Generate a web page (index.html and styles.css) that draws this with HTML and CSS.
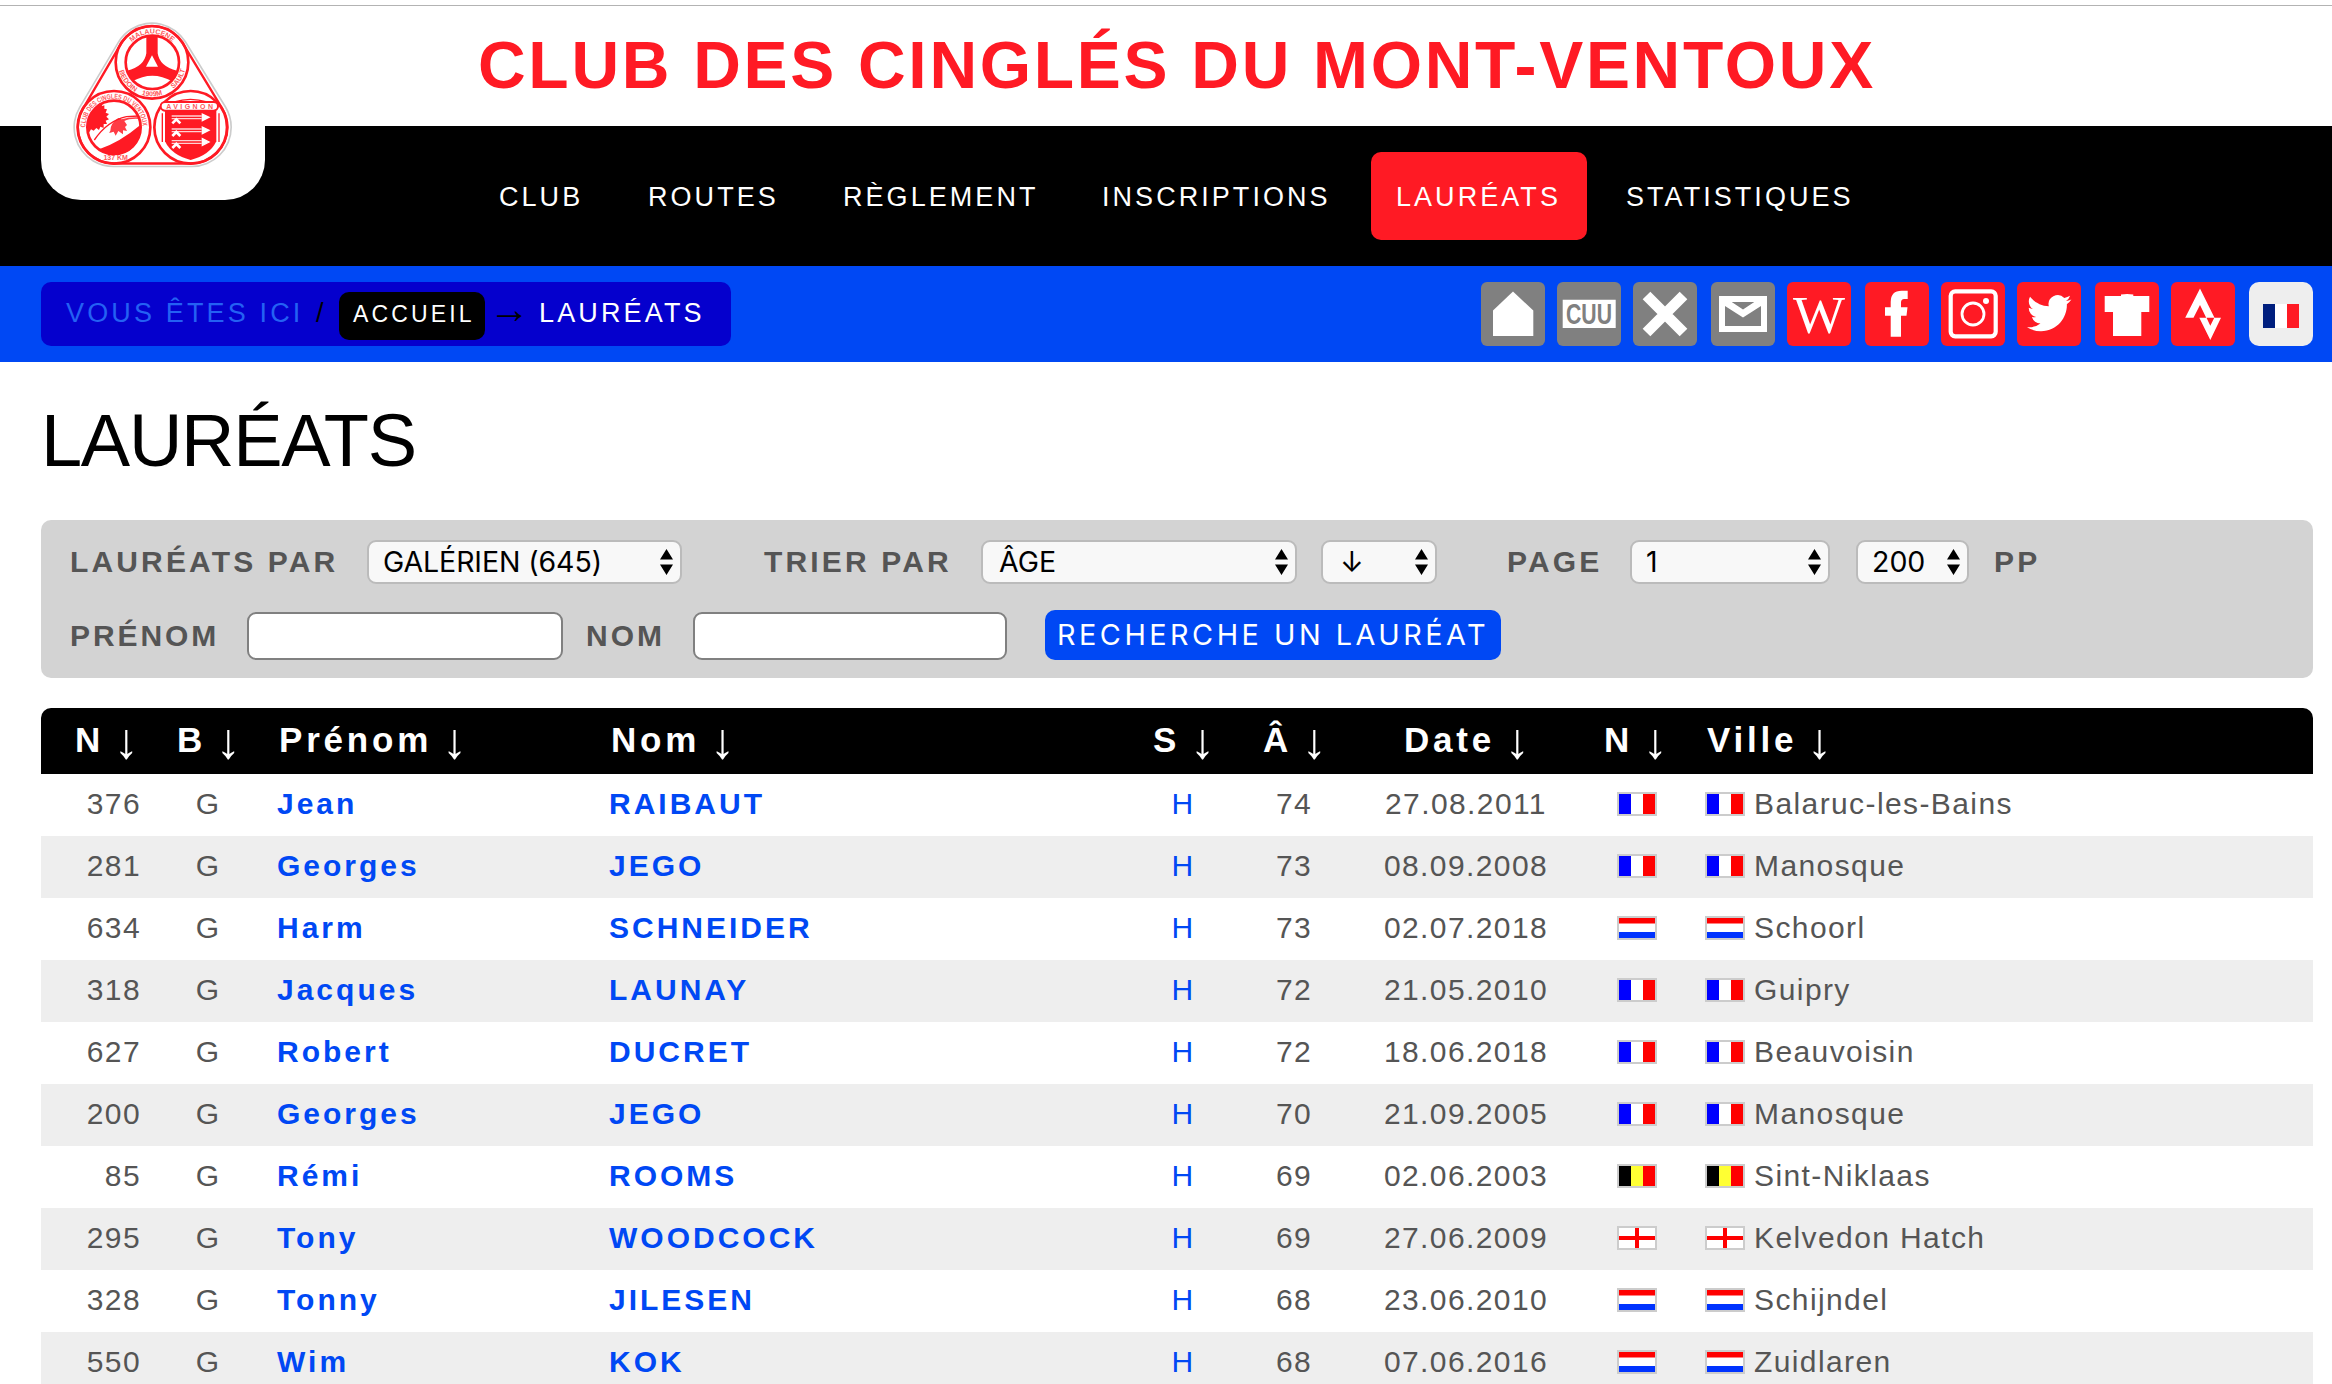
FILE: index.html
```html
<!DOCTYPE html>
<html lang="fr">
<head>
<meta charset="utf-8">
<title>Lauréats - Club des Cinglés du Mont-Ventoux</title>
<link rel="stylesheet" href="styles.css">
</head>
<body>
<svg class="defs" aria-hidden="true">
  <symbol id="fr" viewBox="0 0 40 24"><path fill="#ccc" d="M0 0h40v24H0z"/><path fill="#fff" d="M2 2h36v20H2z"/><path fill="#00f" d="M2 2h12v20H2z"/><path fill="red" d="M26 2h12v20H26z"/></symbol>
  <symbol id="nl" viewBox="0 0 40 24"><path fill="#ccc" d="M0 0h40v24H0z"/><path fill="#fff" d="M2 2h36v20H2z"/><path fill="red" d="M2 2h36v5.500H2z"/><path fill="#03f" d="M2 16h36v6H2z"/></symbol>
  <symbol id="be" viewBox="0 0 40 24"><path fill="#ccc" d="M0 0h40v24H0z"/><path fill="#ff3" d="M2 2h36v20H2z"/><path d="M2 2h12v20H2z"/><path fill="red" d="M26 2h12v20H26z"/></symbol>
  <symbol id="en" viewBox="0 0 40 24"><path fill="#ccc" d="M0 0h40v24H0z"/><path fill="#fff" d="M2 2h36v20H2z"/><path fill="red" d="M18 2h4v20h-4zM2 10h36v4H2z"/></symbol>
  <symbol id="updown" viewBox="0 0 13 26"><path d="M6.500 0 13 10.500H0zM6.500 26 13 15.500H0z"/></symbol>
</svg>

<header class="header">
  <div class="logo">
    <svg width="160" height="146" viewBox="220 66 480 438">
      <g stroke-linejoin="round" fill="none">
        <path stroke="#ccc" stroke-width="240" d="M457 187 341 382H577z"/>
        <path stroke="#fff" stroke-width="230" d="M457 187 341 382H577z"/>
        <path stroke="#ff1a24" stroke-width="224" d="M457 187 343 382H575z"/>
        <path stroke="#fff" fill="#fff" stroke-width="210" d="M457 187 343 382H575z"/>
      </g>
      <g fill="none" stroke="#ff1a24" stroke-width="8">
        <circle cx="457" cy="187" r="109"/><circle cx="458" cy="187" r="80"/>
        <circle cx="343" cy="382" r="109"/><circle cx="343" cy="382" r="80"/>
        <circle cx="573" cy="382" r="109"/>
      </g>
      <g fill="#ff1a24">
        <path d="M440 108h34v52q6 40 58 52l-14 32q-60-34-120 0l-16-32q52-12 58-52zM457 166l-18 34h36z" fill-rule="evenodd"/>
        <path d="M270 350q12-30 32-42l6 10 6-2 0 10 8 2-4 10 10 4-8 8 8 8-10 4 4 10-10 0 0 12-10-4-4 10-8-6-8 8-8-4-6 10-6-10q2-18 8-38z"/>
        <path d="M300 447q60-20 122-72 0 86-79 88-24 0-43-16z"/>
        <path d="M332 392q0-22 24-38l10 4q24-8 54-6v5q-30-2-46 6l8 12-6 6 6 12-12-2 0 12-14-10-8 14-6-12-14 4z" opacity=".85"/>
        <path d="M496 332h154v92q-20 42-77 56-57-14-77-56z"/>
      </g>
      <g fill="none" stroke="#ff1a24">
        <path stroke-width="4" d="M284 420q40-58 96-70l38-2M524 306q48-16 98 0"/>
        <rect x="483" y="306" width="172" height="26" rx="13" stroke-width="6" fill="#fff"/>
        <path stroke-width="4" d="M488 340v86M658 340v86"/>
      </g>
      <g fill="none" stroke="#fff" stroke-width="4">
        <path d="M516 348h90M516 356h90M516 387h90M516 395h90M516 422h90M516 430h90" opacity=".8"/>
        <path stroke-width="8" d="m518 370 12-12 12 12M518 408l12-12 12 12M518 444l12-12 12 12"/>
        <path fill="#fff" d="m608 342 20 10-20 10zM608 381l20 10-20 10zM608 416l20 10-20 10z"/>
      </g>
      <g class="logo-text">
        <path id="a1" fill="none" d="M371 187a86 86 0 0 1 172 0"/>
        <path id="a2" fill="none" d="M355 187a102 102 0 0 0 204 0"/>
        <path id="a3" fill="none" d="M257 382a86 86 0 0 1 172 0"/>
        <text><textPath href="#a1" startOffset="50%" text-anchor="middle">MALAUCENE</textPath></text>
        <text><textPath href="#a2" startOffset="8%">BEDOIN</textPath></text>
        <text><textPath href="#a2" startOffset="50%" text-anchor="middle">1909M</textPath></text>
        <text><textPath href="#a2" startOffset="93%" text-anchor="end">SAULT</textPath></text>
        <text><textPath href="#a3" textLength="266" lengthAdjust="spacingAndGlyphs">CLUB DES CINGLES DU VENTOUX</textPath></text>
        <text x="348" y="479" text-anchor="middle">137 KM</text>
        <text x="500" y="327" textLength="140">AVIGNON</text>
      </g>
    </svg>
  </div>
  <div class="title">CLUB DES CINGLÉS DU MONT-VENTOUX</div>
</header>

<nav class="nav">
  <a>CLUB</a><a>ROUTES</a><a>RÈGLEMENT</a><a>INSCRIPTIONS</a><a class="active">LAURÉATS</a><a>STATISTIQUES</a>
</nav>

<div class="bar">
  <div class="crumbs">
    <span class="here">VOUS ÊTES ICI</span><span class="slash">/</span><a class="home">ACCUEIL</a><span class="arrow">→</span><span class="current">LAURÉATS</span>
  </div>
  <div class="icons">
    <svg class="icon grey" viewBox="0 0 64 64"><path d="M12 54V28.500L32 9.500 52.300 28.500V54z"/></svg>
    <svg class="icon grey" viewBox="0 0 64 64"><path d="M5.700 17.700h53v28.300h-53z"/><text class="cuu" x="9" y="42" textLength="46" lengthAdjust="spacingAndGlyphs">CUU</text></svg>
    <svg class="icon grey" viewBox="0 0 64 64"><path d="M13.500 13.500l37 37M50.500 13.500l-37 37" stroke="#fff" stroke-width="10.800"/></svg>
    <svg class="icon grey wide" viewBox="0 0 64 64"><path d="M8 14h48v36H8zM20.700 20H43.300L32 27.500zM14 24v20h36V24L32 35.500z" fill-rule="evenodd"/></svg>
    <svg class="icon" viewBox="0 0 64 64"><text class="wiki" x="6" y="50.500" textLength="52" lengthAdjust="spacingAndGlyphs">W</text></svg>
    <svg class="icon wide" viewBox="0 0 64 64"><path d="M25.700 54.700V33.700H20v-8.400h5.700V20q0-11.300 11-11.300h6V17h-3.500q-3.200 0-3.200 3.500v4.800h6.500l-1 8.400H36v21z"/></svg>
    <svg class="icon" viewBox="0 0 64 64"><g fill="none" stroke="#fff"><rect x="9.700" y="9.300" width="45" height="45" rx="4.500" stroke-width="4.200"/><circle cx="32" cy="32" r="11" stroke-width="2.800"/></g><circle cx="45" cy="19" r="3"/></svg>
    <svg class="icon" viewBox="0 0 64 64"><path transform="translate(10 9) scale(1.850)" d="M23.953 4.570a10 10 0 01-2.825.775 4.958 4.958 0 002.163-2.723c-.951.555-2.005.959-3.127 1.184a4.920 4.920 0 00-8.384 4.482C7.690 8.095 4.067 6.130 1.640 3.162a4.822 4.822 0 00-.666 2.475c0 1.710.870 3.213 2.188 4.096a4.904 4.904 0 01-2.228-.616v.060a4.923 4.923 0 003.946 4.827 4.996 4.996 0 01-2.212.085 4.936 4.936 0 004.604 3.417 9.867 9.867 0 01-6.102 2.105c-.390 0-.779-.023-1.170-.067a13.995 13.995 0 007.557 2.209c9.053 0 13.998-7.496 13.998-13.985 0-.210 0-.420-.015-.630A9.935 9.935 0 0024 4.590z"/></svg>
    <svg class="icon wide" viewBox="0 0 64 64"><path d="M9.700 14H26v-1.500q6-1 12.300 0V14h16v16h-8v24H18V30H9.700z"/></svg>
    <svg class="icon" viewBox="0 0 64 64"><path d="M29 6.500l14.500 29.200h-8.300L29 23l-6.500 12.700h-8.300zM28.300 35.700h7.200l3.800 8 4-8H50L39.300 58z"/></svg>
    <svg class="icon lang wide" viewBox="0 0 64 64"><path d="M14 22h36v24H14z"/><path fill="#001f7e" d="M14 22h12v24H14z"/><path fill="#ff1a24" d="M38 22h12v24H38z"/></svg>
  </div>
</div>

<main class="main">
  <h1>LAURÉATS</h1>
  <form class="filter">
    <div class="frow">
      <label class="l-par">LAURÉATS PAR</label><div class="select s-par">GALÉRIEN (645)<svg><use href="#updown"/></svg></div>
      <label class="l-sort">TRIER PAR</label><div class="select s-sort">ÂGE<svg><use href="#updown"/></svg></div>
      <div class="select s-dir">↓<svg><use href="#updown"/></svg></div>
      <label class="l-page">PAGE</label><div class="select s-page">1<svg><use href="#updown"/></svg></div>
      <div class="select s-pp">200<svg><use href="#updown"/></svg></div><label class="l-pp">PP</label>
    </div>
    <div class="frow">
      <label class="l-first">PRÉNOM</label><input class="i-first" type="text">
      <label class="l-last">NOM</label><input class="i-last" type="text">
      <button type="button">RECHERCHE UN LAURÉAT</button>
    </div>
  </form>

  <div class="table">
    <div class="thead"><span>N<i>↓</i></span><span>B<i>↓</i></span><span>Prénom<i>↓</i></span><span>Nom<i>↓</i></span><span>S<i>↓</i></span><span>Â<i>↓</i></span><span>Date<i>↓</i></span><span>N<i>↓</i></span><span>Ville<i>↓</i></span></div>
    <div class="tr"><span>376</span><span>G</span><a>Jean</a><a>RAIBAUT</a><span>H</span><span>74</span><span>27.08.2011</span><span><svg><use href="#fr"/></svg></span><span><svg><use href="#fr"/></svg>Balaruc-les-Bains</span></div>
    <div class="tr"><span>281</span><span>G</span><a>Georges</a><a>JEGO</a><span>H</span><span>73</span><span>08.09.2008</span><span><svg><use href="#fr"/></svg></span><span><svg><use href="#fr"/></svg>Manosque</span></div>
    <div class="tr"><span>634</span><span>G</span><a>Harm</a><a>SCHNEIDER</a><span>H</span><span>73</span><span>02.07.2018</span><span><svg><use href="#nl"/></svg></span><span><svg><use href="#nl"/></svg>Schoorl</span></div>
    <div class="tr"><span>318</span><span>G</span><a>Jacques</a><a>LAUNAY</a><span>H</span><span>72</span><span>21.05.2010</span><span><svg><use href="#fr"/></svg></span><span><svg><use href="#fr"/></svg>Guipry</span></div>
    <div class="tr"><span>627</span><span>G</span><a>Robert</a><a>DUCRET</a><span>H</span><span>72</span><span>18.06.2018</span><span><svg><use href="#fr"/></svg></span><span><svg><use href="#fr"/></svg>Beauvoisin</span></div>
    <div class="tr"><span>200</span><span>G</span><a>Georges</a><a>JEGO</a><span>H</span><span>70</span><span>21.09.2005</span><span><svg><use href="#fr"/></svg></span><span><svg><use href="#fr"/></svg>Manosque</span></div>
    <div class="tr"><span>85</span><span>G</span><a>Rémi</a><a>ROOMS</a><span>H</span><span>69</span><span>02.06.2003</span><span><svg><use href="#be"/></svg></span><span><svg><use href="#be"/></svg>Sint-Niklaas</span></div>
    <div class="tr"><span>295</span><span>G</span><a>Tony</a><a>WOODCOCK</a><span>H</span><span>69</span><span>27.06.2009</span><span><svg><use href="#en"/></svg></span><span><svg><use href="#en"/></svg>Kelvedon Hatch</span></div>
    <div class="tr"><span>328</span><span>G</span><a>Tonny</a><a>JILESEN</a><span>H</span><span>68</span><span>23.06.2010</span><span><svg><use href="#nl"/></svg></span><span><svg><use href="#nl"/></svg>Schijndel</span></div>
    <div class="tr"><span>550</span><span>G</span><a>Wim</a><a>KOK</a><span>H</span><span>68</span><span>07.06.2016</span><span><svg><use href="#nl"/></svg></span><span><svg><use href="#nl"/></svg>Zuidlaren</span></div>
  </div>
</main>
</body>
</html>
```
FILE: styles.css
```css
* { box-sizing: border-box; }
body {
  margin: 0;
  height: 1384px;
  overflow: hidden;
  background: #fff;
  color: #555;
  font-family: "Liberation Sans", Arial, sans-serif;
  white-space: nowrap;
}
.defs { display: none; }

/* header */
.header {
  position: relative;
  height: 126px;
  padding: 4px 0 0 478px;
  background: linear-gradient(#b3b3b3, #b3b3b3) 0 5px / 100% 1px no-repeat;
}
.title {
  font-size: 66px;
  font-weight: bold;
  letter-spacing: 2.7px;
  line-height: 122px;
  color: #ff1a24;
}
.logo {
  position: absolute;
  left: 41px;
  top: 22px;
  width: 224px;
  height: 178px;
  padding-left: 32px;
  border-radius: 0 0 40px 40px;
  background: #fff;
}
.logo svg { display: block; }
.logo-text { font-size: 21px; font-weight: bold; fill: #ff1a24; opacity: .75; }

/* navigation */
.nav {
  display: grid;
  grid-template-columns: 149px 195px 259px 294px 230px auto;
  align-items: center;
  height: 140px;
  padding-left: 474px;
  background: #000;
}
.nav a {
  height: 88px;
  margin-right: 14px;
  padding-left: 25px;
  border-radius: 10px;
  font-size: 27px;
  letter-spacing: 3.05px;
  line-height: 90px;
  color: #fff;
}
.nav .active { background: #ff1a24; }

/* breadcrumb and icons */
.bar {
  display: flex;
  justify-content: space-between;
  height: 96px;
  padding: 16px 19px 16px 41px;
  background: #0048f4;
}
.crumbs {
  display: flex;
  align-items: flex-start;
  width: 690px;
  height: 64px;
  padding-left: 25px;
  border-radius: 10px;
  background: #0500cd;
  font-size: 27px;
  letter-spacing: 3.15px;
  line-height: 63px;
}
.here { width: 250px; color: #2461f3; }
.slash { width: 23px; color: #000; letter-spacing: 0; }
.home {
  width: 146px;
  height: 48px;
  margin-top: 10px;
  padding-left: 14px;
  border-radius: 10px;
  background: #000;
  color: #fff;
  font-size: 23px;
  line-height: 44px;
}
.arrow {
  width: 41px;
  margin: 0 9px 0 4px;
  color: #000;
  font-size: 41px;
  letter-spacing: 0;
  line-height: 54px;
}
.current { color: #fff; }
.icons { display: flex; gap: 12px; }
.icon {
  width: 64px;
  height: 64px;
  border-radius: 6px;
  background: #ff1a24;
  fill: #fff;
}
.icon.grey { background: #808080; }
.icon.wide { margin-left: 2px; }
.icon.lang { background: #eee; border-radius: 10px; }
.cuu { font-size: 29px; font-weight: bold; fill: #808080; }
.wiki { font-family: "Liberation Serif", serif; font-size: 52px; }

/* content */
.main { padding: 0 19px 0 41px; }
h1 {
  margin: 0 0 1px;
  color: #000;
  font-size: 74px;
  font-weight: normal;
  letter-spacing: -1.3px;
  line-height: 157px;
}
.filter {
  display: flex;
  flex-direction: column;
  gap: 26px;
  height: 158px;
  padding: 20px 29px;
  border-radius: 10px;
  background: #d3d3d3;
}
.frow { display: flex; align-items: center; height: 44px; }
.frow + .frow { height: 50px; align-items: flex-end; }
label { flex: none; font-size: 30px; font-weight: bold; letter-spacing: 3.15px; line-height: 44px; }
.frow + .frow label { line-height: 49px; }
.l-par { width: 298px; }
.l-sort { width: 217px; margin-left: 82px; }
.l-page { width: 124px; margin-left: 70px; }
.l-pp { margin-left: 25px; }
.l-first { width: 177px; letter-spacing: 2.9px; }
.l-last { width: 107px; margin-left: 23px; letter-spacing: 3px; }
.select {
  display: flex;
  align-items: center;
  justify-content: space-between;
  height: 44px;
  padding: 0 7px 0 14px;
  border: 2px solid #bbb;
  border-radius: 9px;
  background: #f8f8f8;
  color: #000;
  font: 28.5px/40px Inter, sans-serif;
}
.select svg { width: 13px; height: 26px; }
.s-par { width: 315px; margin-left: -1px; letter-spacing: -.1px; }
.s-sort { width: 316px; padding-left: 16px; }
.s-dir { width: 116px; margin-left: 24px; padding-left: 17px; }
.s-page { width: 200px; margin-left: -1px; }
.s-pp { width: 113px; margin-left: 26px; }
input {
  height: 48px;
  border: 2px solid #808080;
  border-radius: 9px;
  background: #fff;
}
.i-first { width: 316px; }
.i-last { width: 314px; }
button {
  width: 456px;
  height: 50px;
  margin-left: 38px;
  padding: 0 0 0 12px;
  border: 0;
  border-radius: 10px;
  background: #0048f4;
  color: #fff;
  font: 28.8px/50px Inter, sans-serif;
  letter-spacing: 3.5px;
  text-align: left;
}

/* results */
.table { margin-top: 30px; }
.thead, .tr {
  display: grid;
  grid-template-columns: 116px 102px 332px 537px 108px 114px 230px 112px 1fr;
}
.thead {
  height: 66px;
  border-radius: 10px 10px 0 0;
  background: #000;
  color: #fff;
  font-size: 35px;
  font-weight: bold;
  letter-spacing: 3.8px;
  line-height: 64px;
}
.thead i {
  margin-left: 10px;
  font-size: 50px;
  font-style: normal;
  font-weight: normal;
  letter-spacing: 0;
  line-height: 0;
  vertical-align: -6px;
}
.thead span { padding-left: 20px; }
.thead span:nth-child(1) { padding-left: 34px; }
.thead span:nth-child(5) { padding-left: 25px; }
.thead span:nth-child(6) { padding-left: 27px; }
.thead span:nth-child(7) { padding-left: 54px; }
.thead span:nth-child(8) { padding-left: 24px; }
.thead span:nth-child(9) { padding-left: 15px; }
.tr {
  height: 62px;
  font-size: 30px;
  letter-spacing: 1.4px;
  line-height: 60px;
}
.tr:nth-child(odd) { background: #eee; }
.tr > * { padding-left: 2px; text-align: center; }
.tr > :nth-child(1) { text-align: right; padding-right: 16px; }
.tr > :nth-child(2) { padding-left: 0; }
.tr > a { padding-left: 18px; text-align: left; font-weight: bold; letter-spacing: 3px; }
.tr > a, .tr > :nth-child(5) { color: #0048f4; }
.tr > :nth-child(8), .tr > :nth-child(9) { display: flex; align-items: center; height: 60px; }
.tr > :nth-child(8) { padding-left: 37px; }
.tr > :nth-child(9) { padding-left: 13px; }
.tr svg { width: 40px; height: 24px; margin-right: 9px; flex: none; }
```
